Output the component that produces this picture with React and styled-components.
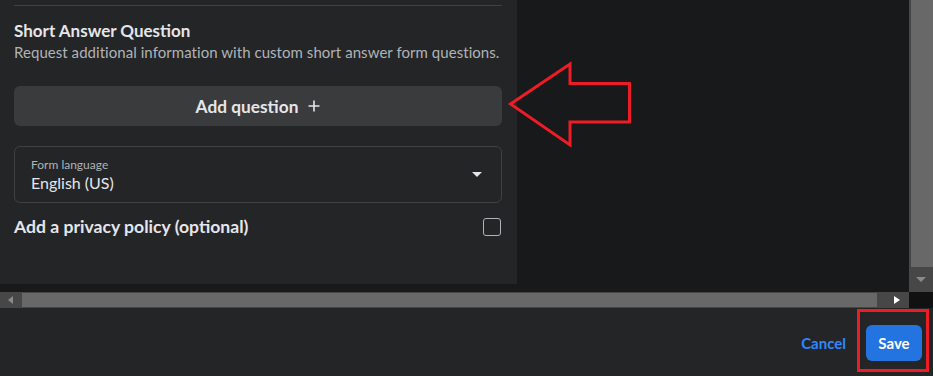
import React from 'react';
import styled, { createGlobalStyle } from 'styled-components';

const GlobalStyle = createGlobalStyle`
  html, body {
    margin: 0;
    padding: 0;
    background: #18191a;
  }
  body {
    font-family: Lato, 'Noto Sans', sans-serif;
  }
`

const Screen = styled.div`
  position: relative;
  width: 933px;
  height: 376px;
  overflow: hidden;
  background: #18191a;
  display: flex;
  flex-direction: column;
`
const Viewport = styled.div`
  display: flex;
  height: 292px;
`
const Canvas = styled.div`
  flex: 1;
  display: flex;
  align-items: flex-start;
`
const Panel = styled.section`
  width: 517px;
  height: 284px;
  box-sizing: border-box;
  background: #242526;
  padding: 5px 15px 0 14px;
  color: #e4e6eb;
`
const Divider = styled.hr`
  margin: 0;
  border: 0;
  border-top: 1px solid #3e4042;
`
const Title = styled.h3`
  margin: 14px 0 0;
  font-size: 17px;
  line-height: 22px;
  font-weight: 700;
`
const Subtitle = styled.p`
  margin: 0;
  font-size: 15px;
  line-height: 20px;
  color: #b0b3b8;
  letter-spacing: 0.05px;
`
const AddButton = styled.button`
  display: flex;
  align-items: center;
  justify-content: center;
  gap: 10px;
  width: 100%;
  height: 40px;
  margin-top: 24px;
  border: 0;
  border-radius: 6px;
  background: #3a3b3c;
  color: #e4e6eb;
  font-family: inherit;
  font-size: 17.3px;
  font-weight: 700;
`
const SelectBox = styled.div`
  display: flex;
  align-items: center;
  justify-content: space-between;
  height: 57px;
  box-sizing: border-box;
  margin-top: 20px;
  padding: 0 19px 0 16px;
  border: 1px solid #3e4042;
  border-radius: 6px;
`
const SelectText = styled.div`
  display: flex;
  flex-direction: column;
`
const SelectLabel = styled.span`
  font-size: 12px;
  line-height: 16px;
  color: #b0b3b8;
`
const SelectValue = styled.span`
  font-size: 16px;
  line-height: 20px;
  color: #e4e6eb;
`
const Caret = styled.span`
  width: 0;
  height: 0;
  border-left: 5px solid transparent;
  border-right: 5px solid transparent;
  border-top: 5px solid #e4e6eb;
`
const CheckRow = styled.label`
  display: flex;
  align-items: center;
  justify-content: space-between;
  margin-top: 13px;
  font-size: 17.6px;
  font-weight: 700;
  line-height: 22px;
`
const CheckBox = styled.span`
  width: 18px;
  height: 18px;
  box-sizing: border-box;
  margin-right: 1px;
  border: 1.5px solid #b0b3b8;
  border-radius: 3px;
`
const VScrollbar = styled.div`
  width: 24px;
  display: flex;
  flex-direction: column;
  background: #474747;
`
const VThumb = styled.div`
  height: 267px;
  margin-left: 2px;
  background: #686868;
`
const ArrowCell = styled.div`
  flex: 1;
  display: flex;
  align-items: center;
  justify-content: center;
`
const TriDown = styled.span`
  width: 0;
  height: 0;
  border-left: 5px solid transparent;
  border-right: 5px solid transparent;
  border-top: 5px solid #8a8a8a;
`
const HScrollbar = styled.div`
  display: flex;
  height: 16px;
  background: #474747;
`
const HTrack = styled.div`
  flex: 1;
  display: flex;
  align-items: center;
`
const HArrow = styled.span`
  width: 0;
  height: 0;
  border-top: 4px solid transparent;
  border-bottom: 4px solid transparent;
  ${p => p.$dir === 'left'
    ? 'border-right: 5px solid #8a8a8a; margin: 0 9px 0 8px;'
    : 'border-left: 6px solid #ffffff; margin: 0 9px 0 17px;'}
`
const HThumb = styled.div`
  width: 855px;
  height: 14px;
  margin-top: 1px;
  align-self: flex-start;
  background: #686868;
`
const Corner = styled.div`
  width: 24px;
  background: #111111;
`
const Footer = styled.footer`
  flex: 1;
  display: flex;
  align-items: center;
  justify-content: flex-end;
  gap: 20px;
  padding: 1px 11px 0 0;
  background: #242526;
`
const LinkButton = styled.button`
  border: 0;
  padding: 0;
  background: none;
  color: #2d88ff;
  font-family: inherit;
  font-size: 15px;
  font-weight: 700;
`
const PrimaryButton = styled.button`
  width: 56px;
  height: 36px;
  border: 0;
  border-radius: 6px;
  background: #2374e1;
  color: #ffffff;
  font-family: inherit;
  font-size: 15px;
  font-weight: 700;
`
const Annotation = styled.svg`
  position: absolute;
  left: 0;
  top: 0;
  pointer-events: none;
`

const PlusIcon = () => (
  <svg width="12" height="12" viewBox="0 0 12 12">
    <path d="M6 0.5v11M0.5 6h11" stroke="#e4e6eb" strokeWidth="1.6" />
  </svg>
);

export default function App() {
  return (
    <Screen>
      <GlobalStyle />
      <Viewport>
        <Canvas>
          <Panel>
            <Divider />
            <Title>Short Answer Question</Title>
            <Subtitle>Request additional information with custom short answer form questions.</Subtitle>
            <AddButton>Add question <PlusIcon /></AddButton>
            <SelectBox>
              <SelectText>
                <SelectLabel>Form language</SelectLabel>
                <SelectValue>English (US)</SelectValue>
              </SelectText>
              <Caret />
            </SelectBox>
            <CheckRow>
              Add a privacy policy (optional)
              <CheckBox />
            </CheckRow>
          </Panel>
        </Canvas>
        <VScrollbar>
          <VThumb />
          <ArrowCell><TriDown /></ArrowCell>
        </VScrollbar>
      </Viewport>
      <HScrollbar>
        <HTrack>
          <HArrow $dir="left" />
          <HThumb />
          <HArrow $dir="right" />
        </HTrack>
        <Corner />
      </HScrollbar>
      <Footer>
        <LinkButton>Cancel</LinkButton>
        <PrimaryButton>Save</PrimaryButton>
      </Footer>
      <Annotation width="933" height="376">
        <polygon
          points="510.5,104 570,64 570,83.5 629.5,83.5 629.5,122 570,122 570,145"
          fill="none"
          stroke="#ee1c25"
          strokeWidth="3"
          strokeLinejoin="miter"
        />
        <rect x="858.5" y="310.5" width="69" height="60" fill="none" stroke="#ee1c25" strokeWidth="3" />
      </Annotation>
    </Screen>
  );
}
